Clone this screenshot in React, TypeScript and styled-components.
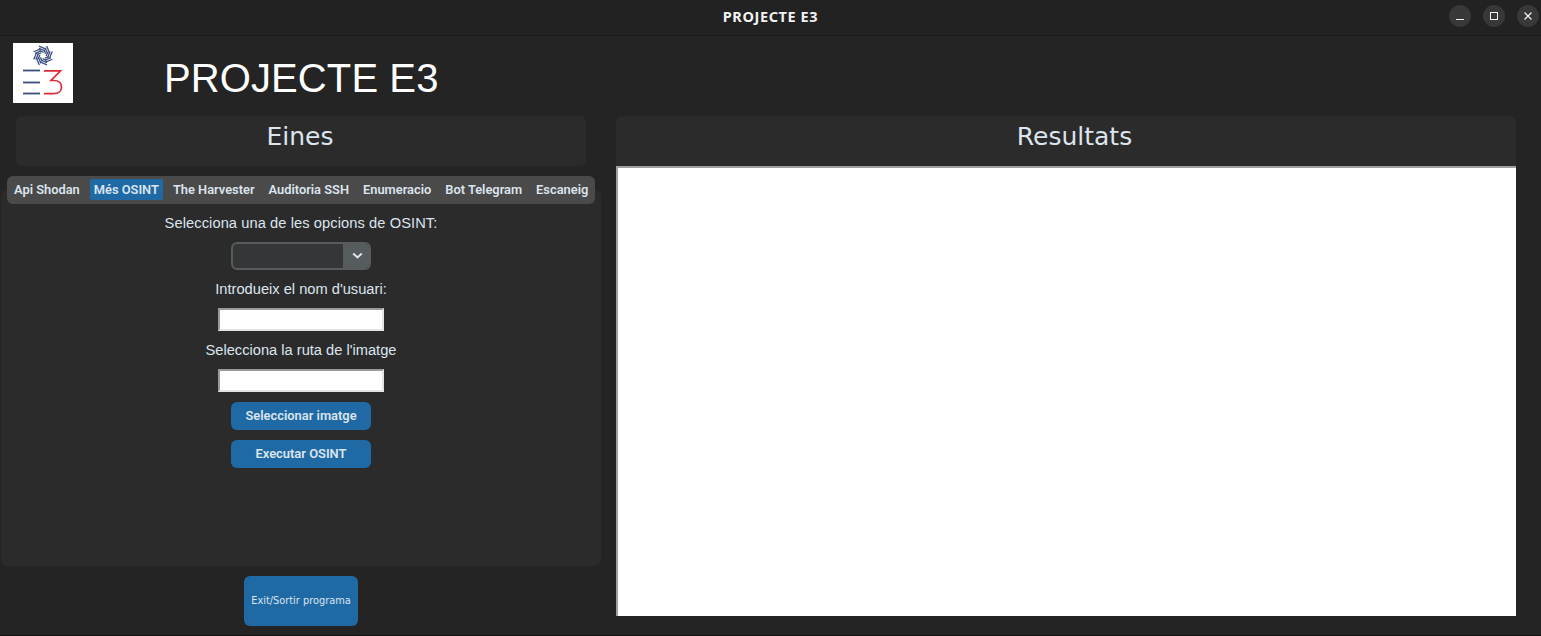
import * as React from 'react'
import styled, { createGlobalStyle } from 'styled-components'

const Global = createGlobalStyle`
  * {
    box-sizing: border-box;
  }

  html,
  body,
  #root {
    width: 100%;
    height: 100%;
    margin: 0;
    padding: 0;
    overflow: hidden;
  }

  body {
    background: #242424;
    color: #dce4ee;
    font-family: 'Liberation Sans', Arial, sans-serif;
  }
`

const Window = styled.div`
  display: flex;
  flex-direction: column;
  height: 636px;
  border-bottom: 1px solid #111;
`

const TitleBar = styled.div`
  position: relative;
  flex: none;
  display: flex;
  align-items: center;
  justify-content: center;
  height: 36px;
  padding-bottom: 3px;
  background: #222222;
  border-bottom: 1px solid #181818;
  color: #f2f2f2;
  font-family: 'Noto Sans', sans-serif;
  font-size: 14.5px;
  font-weight: 700;
  letter-spacing: 0.6px;
`

const WindowControls = styled.div`
  position: absolute;
  top: 5px;
  right: 2px;
  display: flex;
  gap: 12px;
`

const ControlButton = styled.div`
  display: flex;
  align-items: center;
  justify-content: center;
  width: 22px;
  height: 22px;
  border-radius: 50%;
  background: #383838;
`

const Header = styled.header`
  flex: none;
  display: flex;
  align-items: flex-start;
  height: 80px;
  padding: 7px 0 0 13px;
`

const Logo = styled.div`
  flex: none;
  width: 60px;
  height: 60px;
  background: #fff;
`

const AppTitle = styled.h1`
  margin: 12px 0 0 91px;
  color: #fff;
  font-family: 'Liberation Sans', Arial, sans-serif;
  font-size: 40px;
  font-weight: 400;
  line-height: 46px;
  letter-spacing: 0.1px;
`

const Main = styled.main`
  flex: 1;
  display: grid;
  grid-template-columns: 600px 900px;
  column-gap: 15px;
  padding-left: 1px;
  min-height: 0;
`

const LeftColumn = styled.section`
  display: flex;
  flex-direction: column;
`

const RightColumn = styled.section`
  display: flex;
  flex-direction: column;
`

const Heading = styled.h2<{ $inset?: boolean; $square?: boolean }>`
  flex: none;
  height: 50px;
  margin: 0 ${p => (p.$inset ? '15px' : '0')};
  padding: 6px ${p => (p.$inset ? '2px' : '0')} 0 ${p => (p.$square ? '17px' : '0')};
  border-radius: ${p => (p.$square ? '6px 6px 0 0' : '6px')};
  background: #2b2b2b;
  color: #dce4ee;
  font-family: 'DejaVu Sans', sans-serif;
  font-size: 25px;
  font-weight: 400;
  line-height: 30px;
  text-align: center;
`

const TabBar = styled.nav`
  position: relative;
  z-index: 1;
  flex: none;
  display: flex;
  gap: 6px;
  height: 28px;
  margin: 10px 6px -14px;
  padding: 3px;
  overflow: hidden;
  border-radius: 6px;
  background: #4a4a4a;
`

const Tab = styled.div<{ $active?: boolean }>`
  flex: none;
  display: flex;
  align-items: center;
  height: 21px;
  padding: 0 4px;
  border-radius: 2px;
  background: ${p => (p.$active ? '#1f6aa5' : 'transparent')};
  color: #dce4ee;
  font-family: Roboto, sans-serif;
  font-size: 12.85px;
  font-weight: 600;
  white-space: nowrap;
`

const Panel = styled.div`
  flex: none;
  display: flex;
  flex-direction: column;
  align-items: center;
  height: 376px;
  padding-top: 23px;
  border-radius: 6px;
  background: #2b2b2b;
`

const Label = styled.label<{ $top?: number; $spacing?: number }>`
  height: 20px;
  margin-top: ${p => p.$top ?? 0}px;
  color: #dce4ee;
  font-size: 14.67px;
  line-height: 20px;
  letter-spacing: ${p => p.$spacing ?? 0}px;
`

const Dropdown = styled.div`
  display: flex;
  justify-content: flex-end;
  width: 140px;
  height: 28px;
  margin-top: 9px;
  overflow: hidden;
  border: 2px solid #565b5e;
  border-radius: 6px;
  background: #343638;
`

const DropdownArrow = styled.div`
  display: flex;
  align-items: center;
  justify-content: center;
  width: 26px;
  padding-left: 2px;
  background: #565b5e;
`

const TextInput = styled.input<{ $top: number }>`
  display: block;
  width: 166px;
  height: 23px;
  margin-top: ${p => p.$top}px;
  padding: 0;
  border-width: 2px;
  border-style: solid;
  border-color: #9a9a9a #e4e4e4 #e4e4e4 #9a9a9a;
  outline: none;
  background: #fff;
`

const ActionButton = styled.button`
  display: block;
  width: 140px;
  height: 28px;
  margin-top: 10px;
  padding: 0 0 2px;
  border: 0;
  border-radius: 6px;
  background: #1f6aa5;
  color: #dce4ee;
  font-family: Roboto, sans-serif;
  font-size: 12.9px;
  font-weight: 600;
`

const ExitButton = styled.button`
  flex: none;
  align-self: center;
  width: 114px;
  height: 50px;
  margin-top: 10px;
  padding: 0 0 2px;
  border: 0;
  border-radius: 6px;
  background: #1f6aa5;
  color: #dce4ee;
  font-family: 'DejaVu Sans', sans-serif;
  font-size: 9.8px;
`

const ResultBox = styled.div`
  flex: none;
  height: 450px;
  border-top: 2px solid #a0a0a0;
  border-left: 2px solid #a0a0a0;
  background: #fff;
`

const LogoMark = () => {
  const blades = Array.from({ length: 8 }, (_, i) => i * 45)
  return (
    <svg width="60" height="60" viewBox="0 0 60 60">
      <g stroke="#3f5180" strokeWidth="1.3" fill="none">
        {blades.map(a => (
          <g key={a} transform={`rotate(${a} 30 12.5)`}>
            <path d="M26 3.2 L33 6.2" />
            <path d="M26 5.4 L32 8" />
            <path d="M26.5 7.6 L30.5 9.4" />
          </g>
        ))}
      </g>
      <g stroke="#3c4f7c" strokeWidth="1.8" fill="none">
        <path d="M10 27.5 H27" />
        <path d="M10 39.5 H27" />
        <path d="M10 50.5 H27" />
      </g>
      <path
        d="M31 27.8 H47.5 L38 37.5 H41 C46 37.5 48.5 40.5 48.5 44 C48.5 48 45.5 50.7 40.5 50.7 H31"
        stroke="#dc2c36"
        strokeWidth="1.7"
        fill="none"
      />
    </svg>
  )
}

const tabs = ['Api Shodan', 'Més OSINT', 'The Harvester', 'Auditoria SSH', 'Enumeracio', 'Bot Telegram', 'Escaneig']

export default function App() {
  return (
    <Window>
      <Global />
      <TitleBar>
        PROJECTE E3
        <WindowControls>
          <ControlButton>
            <svg width="10" height="10" viewBox="0 0 10 10">
              <path d="M1 8.5 H9" stroke="#f2f2f2" strokeWidth="1" />
            </svg>
          </ControlButton>
          <ControlButton>
            <svg width="10" height="10" viewBox="0 0 10 10">
              <rect x="1.5" y="1.5" width="7" height="7" stroke="#f2f2f2" strokeWidth="1" fill="none" />
            </svg>
          </ControlButton>
          <ControlButton>
            <svg width="10" height="10" viewBox="0 0 10 10">
              <path d="M1.5 1.5 L8.5 8.5 M8.5 1.5 L1.5 8.5" stroke="#f2f2f2" strokeWidth="1.2" />
            </svg>
          </ControlButton>
        </WindowControls>
      </TitleBar>
      <Header>
        <Logo>
          <LogoMark />
        </Logo>
        <AppTitle>PROJECTE E3</AppTitle>
      </Header>
      <Main>
        <LeftColumn>
          <Heading $inset>Eines</Heading>
          <TabBar>
            {tabs.map(t => (
              <Tab key={t} $active={t === 'Més OSINT'}>
                {t}
              </Tab>
            ))}
          </TabBar>
          <Panel>
            <Label $spacing={0.08}>Selecciona una de les opcions de OSINT:</Label>
            <Dropdown>
              <DropdownArrow>
                <svg width="11" height="8" viewBox="0 0 11 8">
                  <path d="M1.2 1.5 L5.5 5.5 L9.8 1.5" stroke="#dce4ee" strokeWidth="2" fill="none" />
                </svg>
              </DropdownArrow>
            </Dropdown>
            <Label $top={9}>Introdueix el nom d'usuari:</Label>
            <TextInput $top={9} />
            <Label $top={9}>Selecciona la ruta de l'imatge</Label>
            <TextInput $top={9} />
            <ActionButton>Seleccionar imatge</ActionButton>
            <ActionButton>Executar OSINT</ActionButton>
          </Panel>
          <ExitButton>Exit/Sortir programa</ExitButton>
        </LeftColumn>
        <RightColumn>
          <Heading $square>Resultats</Heading>
          <ResultBox />
        </RightColumn>
      </Main>
    </Window>
  )
}
